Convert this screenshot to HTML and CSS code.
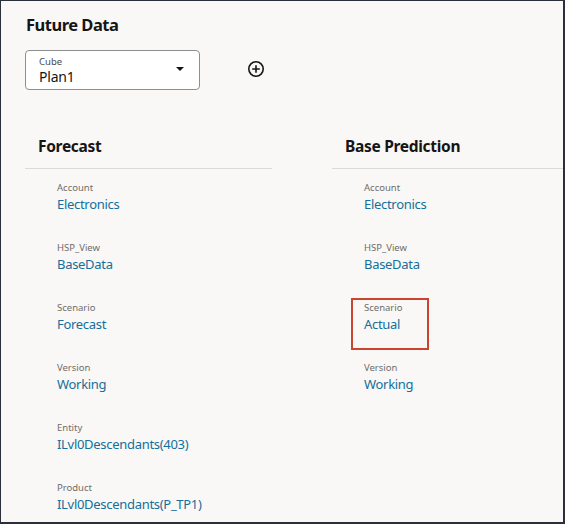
FILE: index.html
```html
<!DOCTYPE html>
<html lang="en">
<head>
<meta charset="utf-8">
<title>Future Data</title>
<link rel="stylesheet" href="styles.css">
</head>
<body>
<div class="frame">
  <h1 class="title">Future Data</h1>
  <div class="toolbar">
    <div class="select">
      <div class="select-text">
        <span class="select-label">Cube</span>
        <span class="select-value">Plan1</span>
      </div>
      <span class="caret"></span>
    </div>
    <svg class="add" width="18" height="18" viewBox="0 0 18 18" aria-hidden="true">
      <circle cx="9" cy="9" r="7.2" fill="none" stroke="#161513" stroke-width="1.6"/>
      <path d="M9 5.2v7.6M5.2 9h7.6" stroke="#161513" stroke-width="1.6" fill="none"/>
    </svg>
  </div>
  <div class="columns">
    <section class="col">
      <h2 class="col-head">Forecast</h2>
      <div class="fields">
        <div class="field"><span class="label">Account</span><span class="value">Electronics</span></div>
        <div class="field"><span class="label">HSP_View</span><span class="value">BaseData</span></div>
        <div class="field"><span class="label">Scenario</span><span class="value">Forecast</span></div>
        <div class="field"><span class="label">Version</span><span class="value">Working</span></div>
        <div class="field"><span class="label">Entity</span><span class="value">ILvl0Descendants(403)</span></div>
        <div class="field"><span class="label">Product</span><span class="value">ILvl0Descendants(P_TP1)</span></div>
      </div>
    </section>
    <section class="col">
      <h2 class="col-head">Base Prediction</h2>
      <div class="fields">
        <div class="field"><span class="label">Account</span><span class="value">Electronics</span></div>
        <div class="field"><span class="label">HSP_View</span><span class="value">BaseData</span></div>
        <div class="field highlight"><span class="label">Scenario</span><span class="value">Actual</span></div>
        <div class="field"><span class="label">Version</span><span class="value">Working</span></div>
      </div>
    </section>
  </div>
</div>
</body>
</html>
```

FILE: styles.css
```css
* { box-sizing: border-box; }
html, body { margin: 0; padding: 0; }
body {
  font-family: "Noto Sans", "Open Sans", sans-serif;
  color: #161513;
  background: #2b2f3a;
}
.frame {
  width: 565px;
  height: 524px;
  overflow: hidden;
  background: #f9f8f6;
  border: 1px solid #2b2f3a;
  border-right-width: 2px;
  border-bottom-width: 2px;
  padding: 0 0 0 24px;
}
.title {
  margin: 11px 0 0 1px;
  font-size: 16.5px;
  line-height: 26px;
  font-weight: 700;
  letter-spacing: -0.5px;
}
.toolbar {
  display: flex;
  align-items: center;
  gap: 47px;
  margin-top: 12px;
}
.select {
  width: 175px;
  height: 40px;
  border: 1px solid #8f8f8f;
  border-radius: 4px;
  background: #fff;
  display: flex;
  align-items: center;
  padding: 0 15px 0 13px;
}
.select-text {
  flex: 1;
  display: flex;
  flex-direction: column;
  gap: 1px;
  padding-top: 1px;
}
.select-label {
  font-size: 9.5px;
  line-height: 12px;
  color: #4a4a4a;
}
.select-value {
  font-size: 14px;
  line-height: 16px;
  letter-spacing: -0.2px;
}
.caret {
  width: 0;
  height: 0;
  border-left: 4px solid transparent;
  border-right: 4px solid transparent;
  border-top: 4px solid #161513;
  margin-top: -2px;
}
.add { display: block; margin-top: -3px; }
.columns {
  display: flex;
  gap: 60px;
  margin-top: 44px;
}
.col {
  flex: 0 0 247px;
}
.col-head {
  margin: 0;
  font-size: 15.5px;
  line-height: 24px;
  font-weight: 700;
  letter-spacing: -0.3px;
  padding: 0 0 10px 13px;
  border-bottom: 1px solid #dcdad7;
}
.fields {
  display: flex;
  flex-direction: column;
  gap: 27px;
  padding: 12px 0 0 32px;
}
.field {
  display: flex;
  flex-direction: column;
  position: relative;
  width: max-content;
}
.label {
  font-size: 9.5px;
  line-height: 14px;
  color: #6f6d6a;
}
.value {
  font-size: 13px;
  line-height: 19px;
  letter-spacing: -0.3px;
  color: #146f9b;
}
.highlight::after {
  content: "";
  position: absolute;
  left: -13px;
  top: -3px;
  width: 74px;
  height: 48px;
  border: 2px solid #c9452f;
}
```
